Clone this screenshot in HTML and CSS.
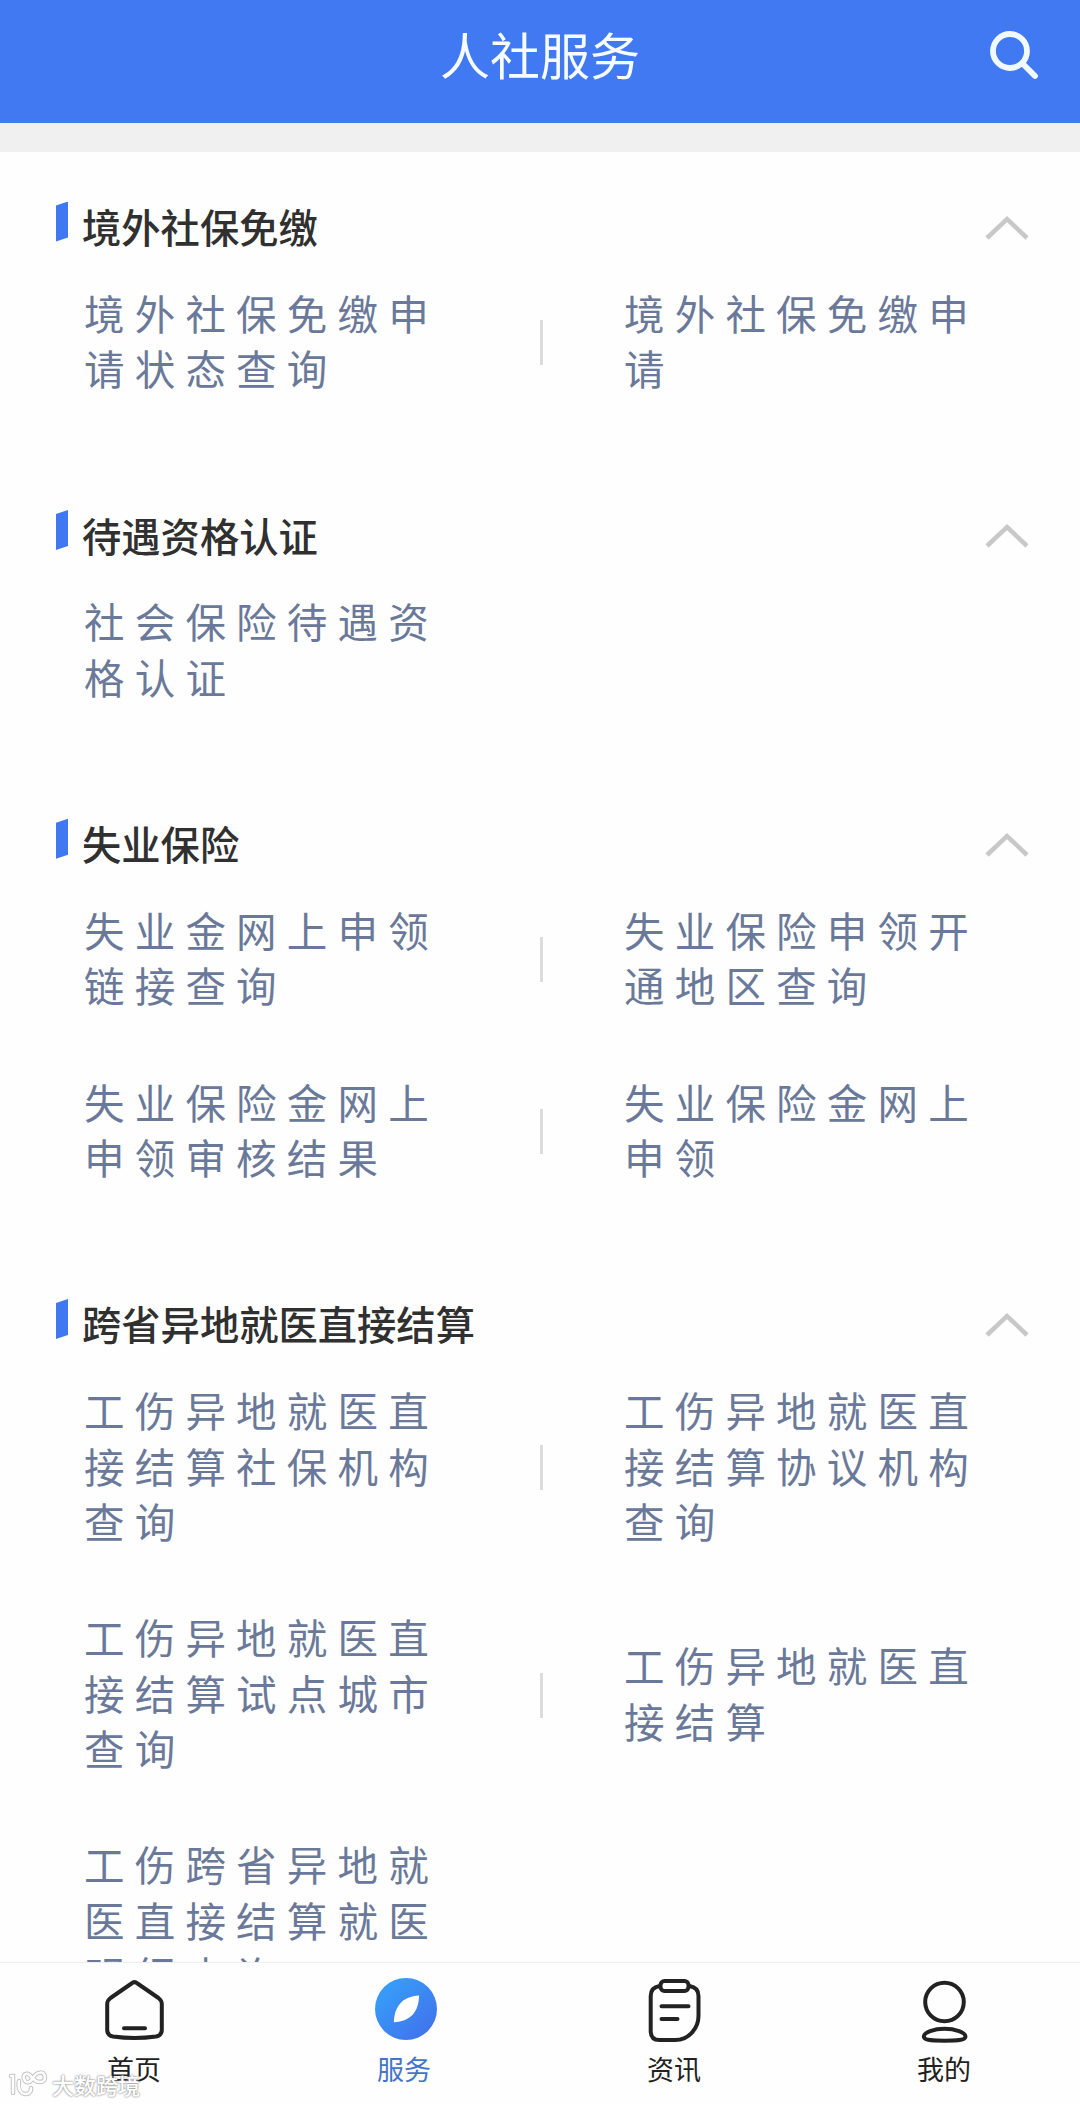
FILE: index.html
```
<!DOCTYPE html>
<html lang="zh-CN">
<head>
  <meta charset="UTF-8">
  <title>人社服务</title>
  <link rel="stylesheet" href="styles.css">
</head>
<body>
  <header class="header">
    <h1>人社服务</h1>
    <svg class="search" viewBox="0 0 50 50">
      <circle cx="20" cy="21" r="17" />
      <path d="M32.5 33.5 L45 46" />
    </svg>
  </header>

  <main class="content">
    <section class="group">
      <div class="group-title">
        <span class="mark"></span>
        <h2>境外社保免缴</h2>
        <svg class="arrow" viewBox="0 0 44 26"><path d="M2 23 L22 4 L42 23" /></svg>
      </div>
      <div class="row">
        <a class="item">境外社保免缴申请状态查询</a>
        <span class="divider"></span>
        <a class="item">境外社保免缴申请</a>
      </div>
    </section>

    <section class="group">
      <div class="group-title">
        <span class="mark"></span>
        <h2>待遇资格认证</h2>
        <svg class="arrow" viewBox="0 0 44 26"><path d="M2 23 L22 4 L42 23" /></svg>
      </div>
      <div class="row">
        <a class="item">社会保险待遇资格认证</a>
      </div>
    </section>

    <section class="group">
      <div class="group-title">
        <span class="mark"></span>
        <h2>失业保险</h2>
        <svg class="arrow" viewBox="0 0 44 26"><path d="M2 23 L22 4 L42 23" /></svg>
      </div>
      <div class="row">
        <a class="item">失业金网上申领链接查询</a>
        <span class="divider"></span>
        <a class="item">失业保险申领开通地区查询</a>
      </div>
      <div class="row">
        <a class="item">失业保险金网上申领审核结果</a>
        <span class="divider"></span>
        <a class="item">失业保险金网上申领</a>
      </div>
    </section>

    <section class="group">
      <div class="group-title">
        <span class="mark"></span>
        <h2>跨省异地就医直接结算</h2>
        <svg class="arrow" viewBox="0 0 44 26"><path d="M2 23 L22 4 L42 23" /></svg>
      </div>
      <div class="row">
        <a class="item">工伤异地就医直接结算社保机构查询</a>
        <span class="divider"></span>
        <a class="item">工伤异地就医直接结算协议机构查询</a>
      </div>
      <div class="row">
        <a class="item">工伤异地就医直接结算试点城市查询</a>
        <span class="divider"></span>
        <a class="item">工伤异地就医直接结算</a>
      </div>
      <div class="row">
        <a class="item">工伤跨省异地就医直接结算就医明细查询</a>
      </div>
    </section>
  </main>

  <nav class="tabbar">
    <a class="tab">
      <svg viewBox="0 0 70 70">
        <path d="M31.5 10.5 Q34.5 7.8 37.5 10.5 L58.5 25 Q61.8 27.5 61.8 31 V57 Q61.8 62.5 56 63.5 Q34.5 66.5 13 63.5 Q7.2 62.5 7.2 57 V31 Q7.2 27.5 10.5 25 Z" />
        <path d="M24 55.3 H45" />
      </svg>
      <span>首页</span>
    </a>
    <a class="tab active">
      <svg viewBox="0 0 70 70">
        <defs>
          <linearGradient id="blue" x1="0.1" y1="0.1" x2="0.85" y2="0.9">
            <stop offset="0" stop-color="#36a0fa" />
            <stop offset="1" stop-color="#4173ec" />
          </linearGradient>
        </defs>
        <circle class="disc" cx="36" cy="36" r="31" fill="url(#blue)" />
        <path class="leaf" d="M49 22.5 C49 38 41 48.5 23.8 49.3 C24.5 33 32.5 23.5 49 22.5 Z" />
      </svg>
      <span>服务</span>
    </a>
    <a class="tab">
      <svg viewBox="0 0 70 70">
        <path d="M19.5 13 Q10.7 14.5 10.7 23 V58 Q10.7 67 19.5 67 H35 C50 67 58.5 54 58.5 43 V23 Q58.5 14.5 49.5 13" />
        <rect x="20.5" y="8" width="28" height="10" rx="4" />
        <path d="M21.5 33.3 H48.5 M21.5 46 H37.5" />
      </svg>
      <span>资讯</span>
    </a>
    <a class="tab">
      <svg viewBox="0 0 70 70">
        <circle cx="34.5" cy="29" r="19.3" />
        <path d="M34.5 55.8 C45 55.8 55.5 59.5 55.5 63.6 C55.5 66.8 50 67.7 34.5 67.7 C19 67.7 13.8 66.8 13.8 63.6 C13.8 59.5 24 55.8 34.5 55.8 Z" />
      </svg>
      <span>我的</span>
    </a>
  </nav>

  <div class="watermark">
    <svg viewBox="0 0 42 28">
      <path class="edge" d="M3 6 H5 V23 M11 11 C8 27 24 27 23 18 M24 8 C20 1 14 4 16 9 C18 14 22 13 25 8 C29 1 36 1 37 7 C37 13 29 14 25 8" />
      <path class="fill" d="M3 6 H5 V23 M11 11 C8 27 24 27 23 18 M24 8 C20 1 14 4 16 9 C18 14 22 13 25 8 C29 1 36 1 37 7 C37 13 29 14 25 8" />
    </svg>
    <span>大数跨境</span>
  </div>
</body>
</html>
```
FILE: styles.css
```
* {
  box-sizing: border-box;
}
body {
  margin: 0;
  height: 2104px;
  display: flex;
  flex-direction: column;
  overflow: hidden;
  background-color: #fefefe;
  font-family: "Noto Sans CJK SC", sans-serif;
}
h1, h2 {
  margin: 0;
}
.header {
  flex: none;
  height: 123px;
  padding: 0 40px 14px 90px;
  display: flex;
  align-items: center;
  background-color: #4179f3;
  color: #f6fcff;
}
.header h1 {
  flex: 1;
  padding-bottom: 4px;
  text-align: center;
  font-size: 50px;
  font-weight: 400;
  line-height: 70px;
}
.search {
  width: 50px;
  height: 50px;
  fill: none;
  stroke: #f0faff;
  stroke-width: 5.8;
  stroke-linecap: round;
}
.content {
  flex: 1;
  min-height: 0;
  overflow: hidden;
  border-top: 29px solid #f0f0f0;
}
.group {
  margin-bottom: 32px;
}
.group-title {
  height: 105px;
  padding: 43px 51px 0 56px;
  display: flex;
  align-items: center;
}
.mark {
  width: 12px;
  height: 40px;
  margin: 0 14px 9px 0;
  background-color: #4077f2;
  clip-path: polygon(0 10%, 100% 0, 100% 90%, 0 100%);
}
.group-title h2 {
  flex: 1;
  color: #303030;
  font-size: 39.3px;
  font-weight: 500;
  line-height: 56px;
}
.arrow {
  width: 44px;
  height: 26px;
  margin-top: 3px;
  fill: none;
  stroke: #c8c8c8;
  stroke-width: 4.5;
}
.row {
  display: flex;
  align-items: center;
  padding: 27.8px 0;
}
.item {
  width: 540px;
  padding: 0 94px 5px 84px;
  color: #6a7999;
  font-size: 40.5px;
  letter-spacing: 10.2px;
  line-height: 55.5px;
}
.divider {
  width: 3px;
  height: 45px;
  margin: 0 -3px 0 0;
  background-color: #dcdcdc;
}
.tabbar {
  flex: none;
  height: 142px;
  display: flex;
  border-top: 1px solid #eeeeee;
  background-color: #fefefe;
}
.tab {
  flex: 1;
  display: flex;
  flex-direction: column;
  align-items: center;
  padding-top: 10px;
  color: #222;
  font-size: 27px;
  line-height: 36px;
}
.tab span {
  margin-right: 2px;
}
.tab svg {
  width: 70px;
  height: 70px;
  margin-bottom: 8px;
  fill: none;
  stroke: #222;
  stroke-width: 4;
  stroke-linecap: round;
  stroke-linejoin: round;
}
.tab .disc {
  stroke: none;
}
.tab .leaf {
  fill: #fff;
  stroke: none;
}
.active {
  color: #4574cc;
}
.watermark {
  position: absolute;
  left: 8px;
  bottom: 4px;
  display: flex;
  align-items: center;
  color: #fff;
  font-size: 22px;
  font-weight: 500;
  line-height: 32px;
  text-shadow: 0 0 2px #888, 0 0 2px #aaa;
}
.watermark svg {
  width: 42px;
  height: 28px;
  margin-right: 2px;
  fill: none;
  stroke-linecap: round;
}
.watermark .edge {
  stroke: #c4c4c4;
  stroke-width: 4.5;
}
.watermark .fill {
  stroke: #fff;
  stroke-width: 2.5;
}
```
